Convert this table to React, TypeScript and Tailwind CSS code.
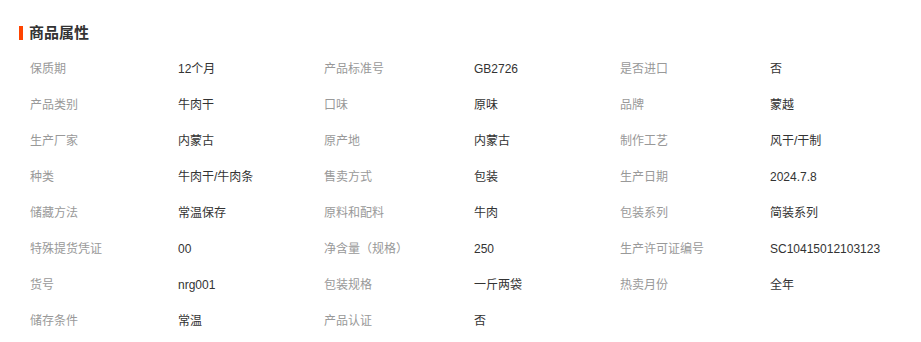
const attrs: [string, string][] = [
  ["保质期", "12个月"],
  ["产品标准号", "GB2726"],
  ["是否进口", "否"],
  ["产品类别", "牛肉干"],
  ["口味", "原味"],
  ["品牌", "蒙越"],
  ["生产厂家", "内蒙古"],
  ["原产地", "内蒙古"],
  ["制作工艺", "风干/干制"],
  ["种类", "牛肉干/牛肉条"],
  ["售卖方式", "包装"],
  ["生产日期", "2024.7.8"],
  ["储藏方法", "常温保存"],
  ["原料和配料", "牛肉"],
  ["包装系列", "简装系列"],
  ["特殊提货凭证", "00"],
  ["净含量（规格）", "250"],
  ["生产许可证编号", "SC10415012103123"],
  ["货号", "nrg001"],
  ["包装规格", "一斤两袋"],
  ["热卖月份", "全年"],
  ["储存条件", "常温"],
  ["产品认证", "否"],
];

const App = () => {
  return (
    <div
      className="w-[921px] h-[342px] bg-white overflow-hidden"
      style={{ fontFamily: '"Liberation Sans", "Noto Sans CJK SC", sans-serif' }}
    >
      {/* Title */}
      <div className="flex items-center pl-[19px] pt-[26px] h-[40px]">
        <span className="w-[4px] h-[14px] bg-[#ff4400]" />
        <h2 className="ml-[6px] text-[15px] leading-[14px] font-bold text-[#333]">商品属性</h2>
      </div>

      {/* Attribute grid */}
      <div className="grid grid-cols-[148px_146px_150px_146px_150px_1fr] pl-[30px] pt-[11px]">
        {attrs.map(([label, value]) => (
          <div key={label} className="contents">
            <div className="h-[36px] flex items-center text-[12px] text-[#999]">{label}</div>
            <div className="h-[36px] flex items-center text-[12px] text-[#333]">{value}</div>
          </div>
        ))}
      </div>
    </div>
  );
};

export default App;
